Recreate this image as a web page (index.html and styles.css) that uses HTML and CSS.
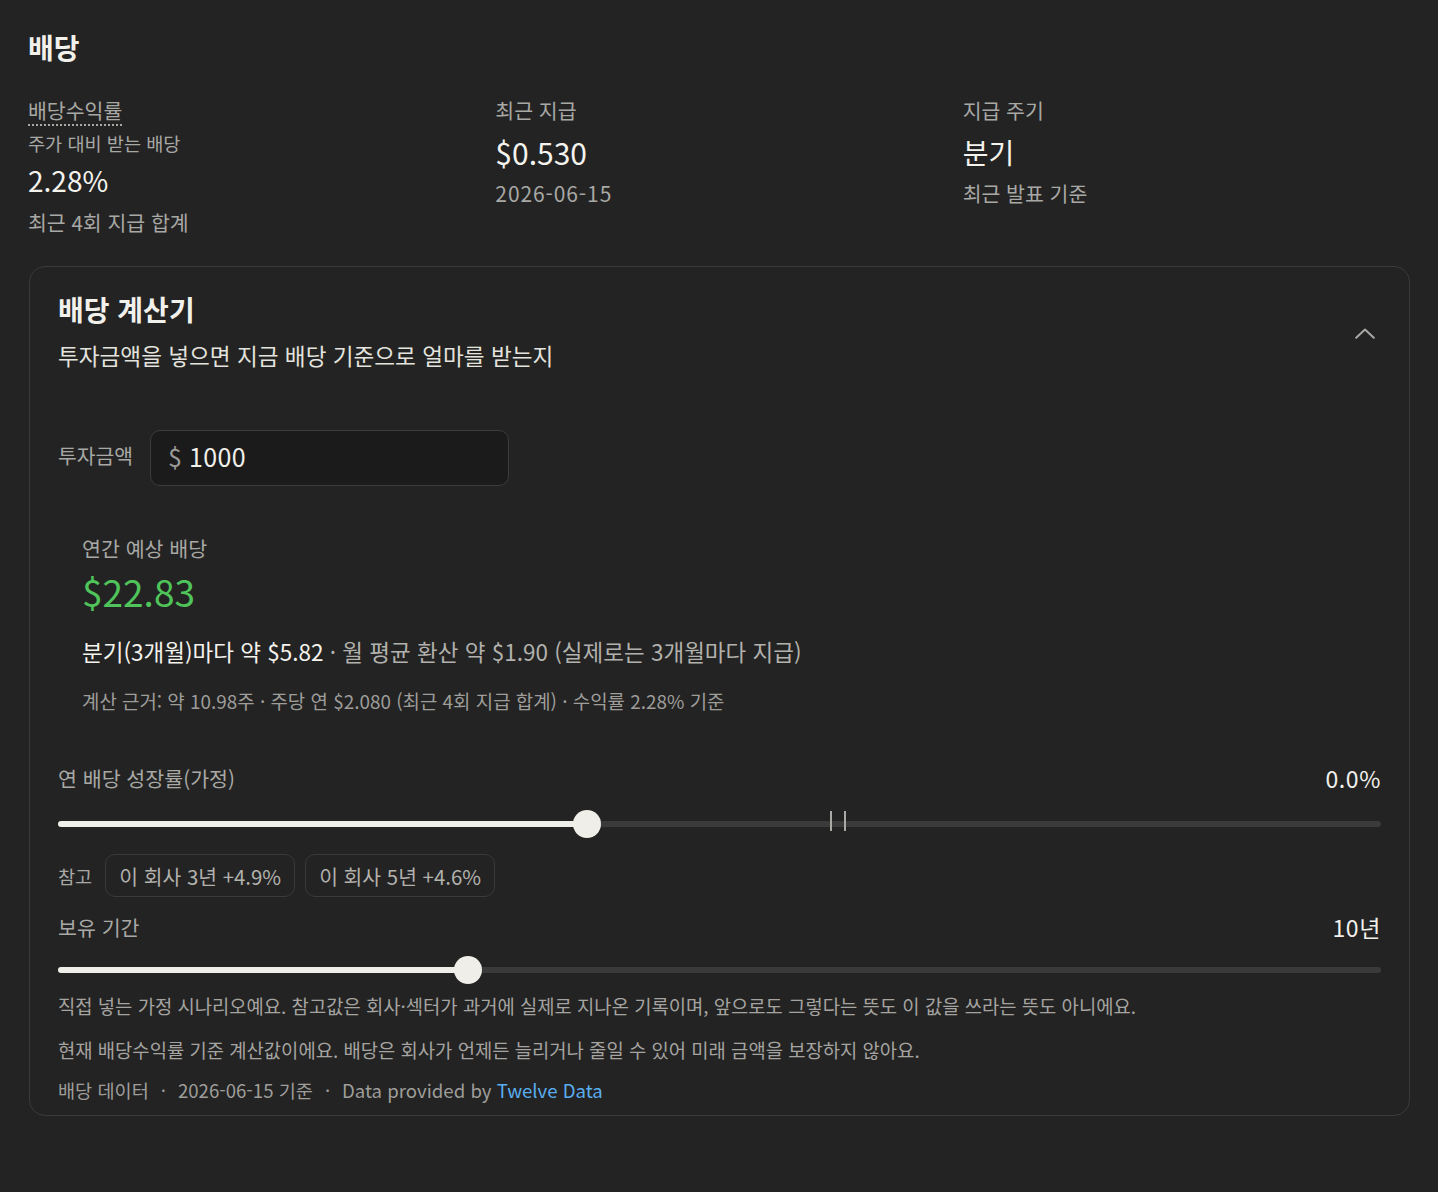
FILE: index.html
```html
<!DOCTYPE html>
<html lang="ko">
<head>
<meta charset="utf-8">
<title>배당</title>
<link rel="stylesheet" href="styles.css">
</head>
<body>
<main class="page">
  <h1 class="title">배당</h1>

  <div class="stats">
    <div class="stat">
      <span class="stat-label dotted">배당수익률</span>
      <div class="stat-sub">주가 대비 받는 배당</div>
      <div class="stat-value v1">2.28%</div>
      <div class="stat-note n1">최근 4회 지급 합계</div>
    </div>
    <div class="stat">
      <span class="stat-label">최근 지급</span>
      <div class="stat-value v2 num">$0.530</div>
      <div class="stat-note n2 date">2026-06-15</div>
    </div>
    <div class="stat">
      <span class="stat-label">지급 주기</span>
      <div class="stat-value v2">분기</div>
      <div class="stat-note n2">최근 발표 기준</div>
    </div>
  </div>

  <section class="calc">
    <header class="calc-head">
      <div class="calc-titles">
        <h2 class="calc-title">배당 계산기</h2>
        <p class="calc-desc">투자금액을 넣으면 지금 배당 기준으로 얼마를 받는지</p>
      </div>
      <span class="chevron">
        <svg width="20" height="11" viewBox="0 0 20 11" fill="none"><path d="M1.2 9.8 L10 1.6 L18.8 9.8" stroke="#a8a8a6" stroke-width="2" stroke-linecap="round" stroke-linejoin="round"/></svg>
      </span>
    </header>

    <div class="amount-row">
      <span class="amount-label">투자금액</span>
      <div class="amount-input"><span class="cur">$</span><span class="amount-val">1000</span></div>
    </div>

    <div class="result">
      <div class="result-label">연간 예상 배당</div>
      <div class="result-value">$22.83</div>
      <div class="result-line"><span class="strong">분기(3개월)마다 약 $5.82</span><span class="muted"> · 월 평균 환산 약 $1.90 (실제로는 3개월마다 지급)</span></div>
      <div class="result-basis">계산 근거: 약 10.98주 · 주당 연 $2.080 (최근 4회 지급 합계) · 수익률 2.28% 기준</div>
    </div>

    <div class="control-head first">
      <span class="control-label">연 배당 성장률(가정)</span>
      <span class="control-value">0.0%</span>
    </div>
    <div class="slider">
      <div class="track">
        <div class="fill" style="width: 39.95%"></div>
        <span class="mark" style="left: 58.45%"></span>
        <span class="mark" style="left: 59.5%"></span>
        <span class="thumb" style="left: 39.95%"></span>
      </div>
    </div>
    <div class="refs">
      <span class="refs-label">참고</span>
      <span class="chip">이 회사 3년 +4.9%</span>
      <span class="chip">이 회사 5년 +4.6%</span>
    </div>

    <div class="control-head second">
      <span class="control-label">보유 기간</span>
      <span class="control-value">10년</span>
    </div>
    <div class="slider slider2">
      <div class="track">
        <div class="fill" style="width: 31.0%"></div>
        <span class="thumb" style="left: 31.0%"></span>
      </div>
    </div>

    <p class="note note1">직접 넣는 가정 시나리오예요. 참고값은 회사·섹터가 과거에 실제로 지나온 기록이며, 앞으로도 그렇다는 뜻도 이 값을 쓰라는 뜻도 아니에요.</p>
    <p class="note note2">현재 배당수익률 기준 계산값이에요. 배당은 회사가 언제든 늘리거나 줄일 수 있어 미래 금액을 보장하지 않아요.</p>
    <p class="footer">배당 데이터<span class="sep">·</span>2026-06-15 기준<span class="sep">·</span>Data provided by <a class="link" href="#">Twelve Data</a></p>
  </section>
</main>
</body>
</html>
```

FILE: styles.css
```css
* { box-sizing: border-box; }

html, body {
  margin: 0;
  padding: 0;
  background: #232323;
  color: #f1f0eb;
  font-family: "Noto Sans CJK KR", "Noto Sans", sans-serif;
}

.page {
  padding: 29px 28px 40px 28px;
  min-height: 1192px;
}

.title {
  margin: 0;
  font-size: 28px;
  line-height: 36px;
  font-weight: 700;
}

.stats {
  display: grid;
  grid-template-columns: repeat(3, 1fr);
  column-gap: 20px;
  margin-top: 32px;
}

.stat {
  display: flex;
  flex-direction: column;
  align-items: flex-start;
}

.stat-label {
  font-size: 20.5px;
  line-height: 26px;
  color: #a8a8a5;
}

.dotted {
  text-decoration: underline dotted #a8a8a5 2px;
  text-underline-offset: 5px;
}

.stat-sub {
  margin-top: 8px;
  font-size: 18.6px;
  line-height: 24px;
  color: #a8a8a5;
}

.stat-value {
  font-size: 28px;
  line-height: 36px;
  color: #f4f3ee;
}

.stat-value.num { font-size: 30px; }

.v1 { margin-top: 7px; }
.v2 { margin-top: 9px; line-height: 40px; }

.stat-note {
  font-size: 20.5px;
  line-height: 26px;
  color: #a8a8a5;
}

.stat-note.date { font-size: 21px; letter-spacing: 0.9px; }

.n1 { margin-top: 11px; }
.n2 { margin-top: 8px; }

.calc {
  margin: 31px 0 0 1px;
  border: 1.5px solid #3a3a3a;
  border-radius: 16px;
  padding: 24px 28px 13px 28px;
}

.calc-head {
  display: flex;
  align-items: center;
  justify-content: space-between;
}

.calc-title {
  margin: 0;
  font-size: 28px;
  line-height: 36px;
  font-weight: 700;
}

.calc-desc {
  margin: 14px 0 0 0;
  font-size: 22.6px;
  line-height: 30px;
  color: #e4e3de;
}

.chevron {
  width: 32px;
  height: 32px;
  margin-top: 4px;
  display: flex;
  align-items: center;
  justify-content: center;
}

.amount-row {
  display: flex;
  align-items: center;
  gap: 17px;
  margin-top: 59px;
}

.amount-label {
  font-size: 20.4px;
  line-height: 28px;
  color: #a8a8a5;
  padding-bottom: 6px;
}

.amount-input {
  width: 359px;
  height: 56px;
  border: 1.5px solid #3c3c3c;
  border-radius: 10px;
  background: #1b1b1b;
  display: flex;
  align-items: center;
  padding: 0 17px 4px 17px;
  gap: 7px;
  font-size: 25px;
}

.cur { color: #9a9a97; }
.amount-val { color: #f1f0eb; letter-spacing: 0.4px; }

.result {
  margin-top: 25px;
  padding: 24px;
}

.result-label {
  font-size: 20.6px;
  line-height: 26px;
  color: #a8a8a5;
}

.result-value {
  margin-top: 6px;
  font-size: 37px;
  line-height: 48px;
  color: #4fc45a;
}

.result-line {
  margin-top: 21px;
  font-size: 22.5px;
  line-height: 30px;
}

.result-line .strong { color: #f4f3ee; }
.result-line .muted { color: #b2b1ad; }

.result-basis {
  margin-top: 23px;
  font-size: 18.9px;
  line-height: 24px;
  color: #9e9d9a;
}

.control-head {
  display: flex;
  justify-content: space-between;
  align-items: center;
  line-height: 28px;
}

.control-head.first { margin-top: 27px; }
.control-head.second { margin-top: 16px; }

.control-label {
  font-size: 20.6px;
  color: #a8a8a5;
}

.control-value {
  font-size: 23px;
  letter-spacing: 0.6px;
  color: #f1f0eb;
}

.slider {
  height: 28px;
  margin-top: 18px;
  display: flex;
  align-items: center;
}

.slider2 { margin-top: 15px; }

.track {
  position: relative;
  width: 100%;
  height: 6px;
  border-radius: 3px;
  background: #3a3a3a;
}

.fill {
  height: 100%;
  border-radius: 3px;
  background: #efeee8;
}

.thumb {
  position: absolute;
  top: 50%;
  width: 28px;
  height: 28px;
  margin: -14px 0 0 -14px;
  border-radius: 50%;
  background: #efeee8;
}

.mark {
  position: absolute;
  top: -10px;
  width: 2px;
  height: 20px;
  margin-left: -1px;
  background: #a9a9a6;
}

.refs {
  display: flex;
  align-items: center;
  gap: 10px;
  margin-top: 16px;
}

.refs-label {
  font-size: 18.6px;
  color: #a8a8a5;
  margin-right: 3px;
}

.chip {
  height: 43px;
  padding: 0 13px;
  display: inline-flex;
  align-items: center;
  border: 1.5px solid #3a3a3a;
  border-radius: 10px;
  font-size: 20.4px;
  color: #b2b1ad;
}

.note {
  margin: 0;
  font-size: 18.8px;
  line-height: 24px;
  color: #a5a4a1;
}

.note1 { margin-top: 10px; }
.note2 { margin-top: 20px; }

.footer {
  margin: 16px 0 0 0;
  font-size: 18.6px;
  line-height: 24px;
  color: #9e9d9a;
}

.sep {
  margin: 0 12px;
}

.link {
  color: #5aaef0;
  text-decoration: none;
}
```
